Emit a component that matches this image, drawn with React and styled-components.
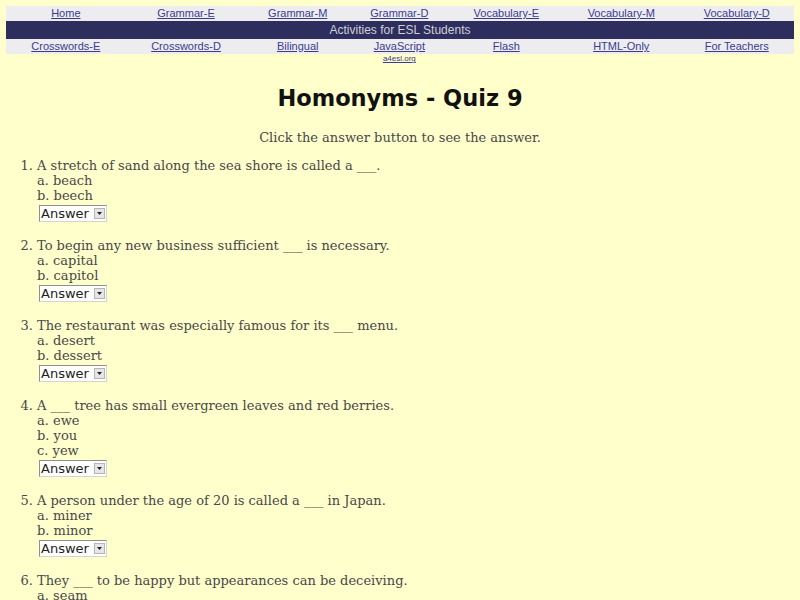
import React from "react";
import styled, { createGlobalStyle } from "styled-components";

const Global = createGlobalStyle`
  html, body { background: #ffffcc; }
  body {
    margin: 6px 6px 0 6px;
    font-family: "DejaVu Serif", serif;
    font-size: 13px;
    color: #484848;
  }
`;

const NavTable = styled.table`
  width: 100%;
  border-collapse: collapse;
  font-family: "Liberation Sans", Arial, sans-serif;
  font-size: 11px;
`;

const LinkRow = styled.tr`
  background: #ededf0;
`;

const LinkCell = styled.td`
  text-align: center;
  vertical-align: top;
  padding: 1px 0 2px;
  height: 11px;
  line-height: 12px;
`;

const NavLink = styled.a`
  color: #3b3b8f;
  text-decoration: underline;
`;

const SubLink = styled.a`
  display: block;
  color: #3b3b8f;
  font-size: 8px;
  line-height: 9px;
  text-decoration: underline;
`;

const BannerCell = styled.td`
  background: #2d2d5e;
  color: #cfcfd8;
  text-align: center;
  font-size: 12px;
  height: 18px;
  padding: 0;
`;

const SubCell = styled.td`
  text-align: center;
  padding: 0;
  height: 10px;
  vertical-align: top;
`;

const Title = styled.h1`
  font-family: "Comic Sans MS", "DejaVu Sans", sans-serif;
  font-weight: bold;
  font-size: 22.5px;
  line-height: 28px;
  color: #111111;
  text-align: center;
  margin: 20px 0 18px;
`;

const Intro = styled.p`
  text-align: center;
  margin: 0 0 13px;
  line-height: 15px;
`;

const QuizList = styled.ol`
  margin: 0;
  padding-left: 31px;
  line-height: 15px;
`;

const Question = styled.li`
  margin-bottom: 16px;
`;

const Choice = styled.div``;

const SelectBox = styled.div`
  display: flex;
  align-items: stretch;
  width: 68px;
  margin: 2px 0 0 2px;
  height: 17px;
  box-sizing: border-box;
  border: 1px solid #8f8f8f;
  border-right-color: #d4d4d4;
  border-bottom-color: #d4d4d4;
  background: #ffffff;
`;

const Select = styled.select`
  appearance: none;
  flex: 1;
  min-width: 0;
  border: none;
  background: transparent;
  font-family: "DejaVu Sans", "Liberation Sans", sans-serif;
  font-size: 13px;
  color: #222;
  padding: 0 0 0 1px;
  margin: 0;
  outline: none;
  line-height: 15px;
`;

const Arrow = styled.span`
  width: 11px;
  margin: 2px 1px 2px 0;
  background: #e6e6e6;
  border: 1px solid #b5b5b5;
  box-sizing: border-box;
  display: flex;
  align-items: center;
  justify-content: center;
`;

const links1 = ["Home", "Grammar-E", "Grammar-M", "Grammar-D", "Vocabulary-E", "Vocabulary-M", "Vocabulary-D"];
const links2 = ["Crosswords-E", "Crosswords-D", "Bilingual", "JavaScript", "Flash", "HTML-Only", "For Teachers"];

const questions = [
  { q: "A stretch of sand along the sea shore is called a ___.", c: ["beach", "beech"] },
  { q: "To begin any new business sufficient ___ is necessary.", c: ["capital", "capitol"] },
  { q: "The restaurant was especially famous for its ___ menu.", c: ["desert", "dessert"] },
  { q: "A ___ tree has small evergreen leaves and red berries.", c: ["ewe", "you", "yew"] },
  { q: "A person under the age of 20 is called a ___ in Japan.", c: ["miner", "minor"] },
  { q: "They ___ to be happy but appearances can be deceiving.", c: ["seam", "seem"] },
];

const letters = ["a", "b", "c", "d"];

function AnswerSelect({ choices }) {
  return (
    <SelectBox>
      <Select defaultValue="">
        <option value="">Answer</option>
        {choices.map((c, i) => (
          <option key={i} value={c}>{letters[i]}. {c}</option>
        ))}
      </Select>
      <Arrow>
        <svg width="5" height="3" viewBox="0 0 5 3"><path d="M0 0h5L2.5 3z" fill="#222" /></svg>
      </Arrow>
    </SelectBox>
  );
}

export default function App() {
  return (
    <>
      <Global />
      <NavTable>
        <tbody>
          <LinkRow>
            {links1.map((l) => (
              <LinkCell key={l}><NavLink href="#">{l}</NavLink></LinkCell>
            ))}
          </LinkRow>
          <tr>
            <BannerCell colSpan={7}>Activities for ESL Students</BannerCell>
          </tr>
          <LinkRow>
            {links2.map((l) => (
              <LinkCell key={l}><NavLink href="#">{l}</NavLink></LinkCell>
            ))}
          </LinkRow>
          <tr>
            <SubCell colSpan={3} />
            <SubCell><SubLink href="#">a4esl.org</SubLink></SubCell>
            <SubCell colSpan={3} />
          </tr>
        </tbody>
      </NavTable>
      <Title>Homonyms - Quiz 9</Title>
      <Intro>Click the answer button to see the answer.</Intro>
      <QuizList>
        {questions.map((item, i) => (
          <Question key={i}>
            {item.q}
            {item.c.map((c, j) => (
              <Choice key={j}>{letters[j]}. {c}</Choice>
            ))}
            <AnswerSelect choices={item.c} />
          </Question>
        ))}
      </QuizList>
    </>
  );
}
